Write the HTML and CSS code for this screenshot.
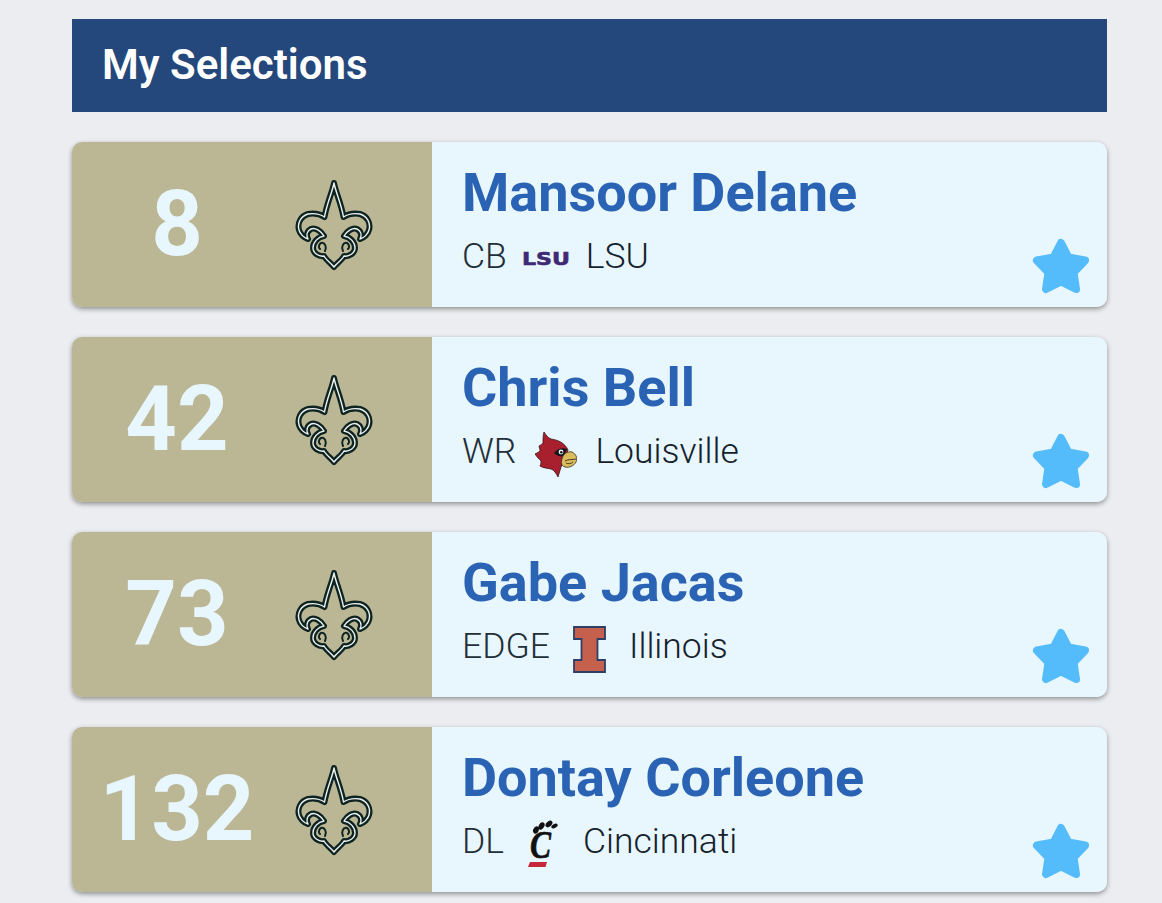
FILE: index.html
```html
<!DOCTYPE html>
<html lang="en">
<head>
<meta charset="utf-8">
<title>My Selections</title>
<link rel="stylesheet" href="styles.css">
</head>
<body>
<svg class="defs" width="0" height="0" aria-hidden="true">
  <defs>
    <path id="fleur-shape" d="M0,4 C2,14 7,24 9.500,38 C14,35 20,34 26,35 C33,37 37,44 35,51 C34,55 30,59 26,60 C28,56 27,52 23,50 C19,48 13,52 10,57 C16,58 21,63 21,69 C21,74 15,78 10,77 C8,81 3,84 0,88 C-3,84 -8,81 -10,77 C-15,78 -21,74 -21,69 C-21,63 -16,58 -10,57 C-13,52 -19,48 -23,50 C-27,52 -28,56 -26,60 C-30,59 -34,55 -35,51 C-37,44 -33,37 -26,35 C-20,34 -14,35 -9.500,38 C-7,24 -2,14 0,4 Z"/>
    <path id="fleur-inner" d="M9,72 C7,68 9,63 13,64 C15,65 16,69 14,70 M-9,72 C-7,68 -9,63 -13,64 C-15,65 -16,69 -14,70"/>
    <symbol id="fleur" viewBox="-39 0 78 92">
      <g fill="#bbb795" stroke="#0e2423" stroke-linejoin="round" stroke-linecap="round">
        <use href="#fleur-shape" stroke-width="6"/>
        <use href="#fleur-inner" fill="none" stroke-width="2"/>
      </g>
      <g fill="none" stroke="#eef2ee" stroke-linejoin="round" stroke-linecap="round" stroke-width="1.400">
        <use href="#fleur-shape"/>
      </g>
    </symbol>
    <symbol id="star" viewBox="0 0 58 56">
      <path d="M29 5 L36.500 19.500 L53 22.500 L41.500 34.500 L44 51 L29 43.500 L14 51 L16.500 34.500 L5 22.500 L21.500 19.500 Z" fill="#55bcfb" stroke="#55bcfb" stroke-width="8" stroke-linejoin="round"/>
    </symbol>
  </defs>
</svg>

<main class="page">
  <header class="page-header"><h1 class="page-title">My Selections</h1></header>

  <article class="card">
    <div class="pick">
      <span class="pick-number">8</span>
      <svg class="team-logo" aria-hidden="true"><use href="#fleur"/></svg>
    </div>
    <div class="player">
      <h2 class="player-name">Mansoor Delane</h2>
      <p class="player-meta">
        <span class="position">CB</span>
        <span class="school-logo">
          <svg class="lsu" viewBox="0 0 48 18" aria-hidden="true"><text class="lsu-text" x="0" y="14" textLength="48" lengthAdjust="spacingAndGlyphs">LSU</text></svg>
        </span>
        <span class="school">LSU</span>
      </p>
    </div>
    <svg class="star" aria-hidden="true"><use href="#star"/></svg>
  </article>

  <article class="card">
    <div class="pick">
      <span class="pick-number">42</span>
      <svg class="team-logo" aria-hidden="true"><use href="#fleur"/></svg>
    </div>
    <div class="player">
      <h2 class="player-name">Chris Bell</h2>
      <p class="player-meta">
        <span class="position">WR</span>
        <span class="school-logo">
          <svg class="cardinal" viewBox="0 0 42 46" aria-hidden="true">
            <path d="M9 1 C11 4 13 7 16 8 C23 9 30 12 33 19 L29 29 L26 36 L23 46 C21 42 19 39 16 38 C12 37 8 37 5 35 C6 33 6 31 6 30 C4 28 2 26 0 23 C2 22 4 21 5 20 C5 18 4 16 4 15 C6 14 7 13 8 12 C8 8 8 4 9 1 Z" fill="#a8202e" stroke="#3a1418" stroke-width=".8" stroke-linejoin="round"/>
            <path d="M19 22 C22 18 27 16 32 18 L29 25 C26 26 22 25 19 22 Z" fill="#14161c"/>
            <circle cx="26" cy="21" r="2.400" fill="#f4f4f4"/>
            <circle cx="26.300" cy="21.300" r="1.200" fill="#14161c"/>
            <path d="M27 28 C28 23 32 20 37 21 C41 23 43 27 41 31 C39 35 34 37 30 36 C26 35 26 31 27 28 Z" fill="#d9bc5c" stroke="#3a2c18" stroke-width=".8"/>
            <path d="M30 30 C33 28 37 29 41 28 M31 32 C33 33 36 33 38 31" fill="none" stroke="#3a2c18" stroke-width=".9"/>
          </svg>
        </span>
        <span class="school">Louisville</span>
      </p>
    </div>
    <svg class="star" aria-hidden="true"><use href="#star"/></svg>
  </article>

  <article class="card">
    <div class="pick">
      <span class="pick-number">73</span>
      <svg class="team-logo" aria-hidden="true"><use href="#fleur"/></svg>
    </div>
    <div class="player">
      <h2 class="player-name">Gabe Jacas</h2>
      <p class="player-meta">
        <span class="position">EDGE</span>
        <span class="school-logo">
          <svg class="illinois" viewBox="0 0 33 47" aria-hidden="true">
            <path d="M1 1 H32 V13 H24.500 V34 H32 V46 H1 V34 H8.500 V13 H1 Z" fill="#c4604c" stroke="#2d3f66" stroke-width="1.800"/>
          </svg>
        </span>
        <span class="school">Illinois</span>
      </p>
    </div>
    <svg class="star" aria-hidden="true"><use href="#star"/></svg>
  </article>

  <article class="card">
    <div class="pick">
      <span class="pick-number">132</span>
      <svg class="team-logo" aria-hidden="true"><use href="#fleur"/></svg>
    </div>
    <div class="player">
      <h2 class="player-name">Dontay Corleone</h2>
      <p class="player-meta">
        <span class="position">DL</span>
        <span class="school-logo">
          <svg class="bearcat" viewBox="0 0 30 48" aria-hidden="true">
            <ellipse cx="8" cy="10" rx="2.700" ry="3.800" transform="rotate(25 8 10)" fill="#111"/>
            <ellipse cx="13.500" cy="6" rx="2.700" ry="4" transform="rotate(30 13.500 6)" fill="#111"/>
            <ellipse cx="21" cy="4" rx="2.500" ry="4" transform="rotate(50 21 4)" fill="#111"/>
            <ellipse cx="26.500" cy="6" rx="2" ry="3.400" transform="rotate(65 26.500 6)" fill="#111"/>
            <text class="bearcat-text" x="2" y="38" textLength="21" lengthAdjust="spacingAndGlyphs">C</text>
            <path d="M2 42 H19 L17.500 47 H0 Z" fill="#c5283b"/>
          </svg>
        </span>
        <span class="school">Cincinnati</span>
      </p>
    </div>
    <svg class="star" aria-hidden="true"><use href="#star"/></svg>
  </article>
</main>
</body>
</html>
```

FILE: styles.css
```css
* {
  box-sizing: border-box;
}

html,
body {
  margin: 0;
  height: 100%;
  overflow: hidden;
}

body {
  background: #ebedf0;
  font-family: Roboto, "Liberation Sans", sans-serif;
}

.defs {
  display: block;
  height: 0;
}

.page {
  display: flex;
  flex-direction: column;
  gap: 30px;
  width: 1035px;
  margin-left: 72px;
  padding-top: 19px;
}

.page-header {
  display: flex;
  align-items: center;
  height: 93px;
  padding: 0 0 2px 30px;
  background: #24487c;
}

.page-title {
  margin: 0;
  color: #fff;
  font-size: 42px;
  font-weight: 600;
}

.card {
  position: relative;
  display: flex;
  height: 165px;
  border-radius: 10px;
  overflow: hidden;
  box-shadow: 0 2px 5px rgba(0, 0, 0, 0.4);
}

.pick {
  display: flex;
  align-items: center;
  flex: 0 0 360px;
  background: #bbb795;
}

.pick-number {
  flex: 0 0 210px;
  color: #e8f6fd;
  font-size: 90px;
  font-weight: 700;
  line-height: 1;
  text-align: center;
}

.team-logo {
  width: 78px;
  height: 92px;
  margin-left: 13px;
}

.player {
  flex: 1;
  padding: 21px 0 0 30px;
  background: #e8f6fd;
}

.player-name {
  margin: 0;
  color: #2b63b4;
  font-size: 54px;
  font-weight: 700;
  line-height: 60px;
}

.player-meta {
  display: flex;
  align-items: center;
  height: 50px;
  margin: 8px 0 0;
  color: #222e38;
  font-size: 35.500px;
  font-weight: 300;
}

.school-logo {
  display: flex;
  align-items: center;
  justify-content: center;
  flex: 0 0 79px;
  height: 50px;
}

.school {
  color: #15222c;
}

.lsu {
  width: 48px;
  height: 18px;
  margin-top: 8px;
  overflow: visible;
}

.lsu-text {
  fill: #3e2a73;
  stroke: #3e2a73;
  stroke-width: 0.6px;
  font-family: "DejaVu Sans", sans-serif;
  font-size: 18px;
  font-weight: 700;
}

.cardinal {
  width: 42px;
  height: 46px;
  margin-top: 6px;
}

.illinois {
  width: 33px;
  height: 47px;
  margin-top: 6px;
}

.bearcat {
  width: 30px;
  height: 48px;
  margin-top: 5px;
}

.bearcat-text {
  fill: #111;
  stroke: #111;
  stroke-width: 0.7px;
  font-family: "Liberation Serif", serif;
  font-size: 40px;
  font-style: italic;
  font-weight: 700;
}

.star {
  position: absolute;
  right: 17px;
  bottom: 13px;
  width: 58px;
  height: 56px;
}
```
